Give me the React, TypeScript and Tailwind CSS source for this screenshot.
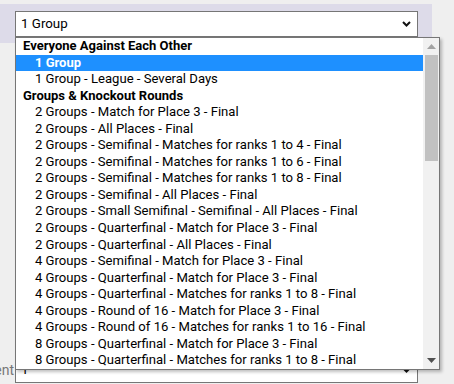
import React from 'react';

const sections: { title: string; items: string[] }[] = [
  {
    title: 'Everyone Against Each Other',
    items: ['1 Group', '1 Group - League - Several Days'],
  },
  {
    title: 'Groups & Knockout Rounds',
    items: [
      '2 Groups - Match for Place 3 - Final',
      '2 Groups - All Places - Final',
      '2 Groups - Semifinal - Matches for ranks 1 to 4 - Final',
      '2 Groups - Semifinal - Matches for ranks 1 to 6 - Final',
      '2 Groups - Semifinal - Matches for ranks 1 to 8 - Final',
      '2 Groups - Semifinal - All Places - Final',
      '2 Groups - Small Semifinal - Semifinal - All Places - Final',
      '2 Groups - Quarterfinal - Match for Place 3 - Final',
      '2 Groups - Quarterfinal - All Places - Final',
      '4 Groups - Semifinal - Match for Place 3 - Final',
      '4 Groups - Quarterfinal - Match for Place 3 - Final',
      '4 Groups - Quarterfinal - Matches for ranks 1 to 8 - Final',
      '4 Groups - Round of 16 - Match for Place 3 - Final',
      '4 Groups - Round of 16 - Matches for ranks 1 to 16 - Final',
      '8 Groups - Quarterfinal - Match for Place 3 - Final',
      '8 Groups - Quarterfinal - Matches for ranks 1 to 8 - Final',
    ],
  },
];

const selected = '1 Group';

const Chevron = () => (
  <svg width="9" height="6" viewBox="0 0 9 6" className="shrink-0">
    <path d="M1 1l3.5 3.5L8 1" fill="none" stroke="#111" strokeWidth="2" />
  </svg>
);

const SelectBox: React.FC<{ value: string }> = ({ value }) => (
  <div className="w-[403px] h-[26px] bg-white border border-[#767676] flex items-center justify-between pl-[5px] pr-[6px] text-[13.33px] text-black">
    <span>{value}</span>
    <Chevron />
  </div>
);

const DropdownList = () => (
  <div className="absolute left-[15px] top-[37px] w-[425px] h-[333px] bg-white border border-[#767676] shadow-[2px_2px_3px_rgba(0,0,0,0.25)] flex">
    <ul className="flex-1 overflow-hidden text-[13.1px] leading-[16.55px] text-black">
      {sections.map((s) => (
        <React.Fragment key={s.title}>
          <li className="pl-[7px] font-bold text-[13px] whitespace-nowrap">{s.title}</li>
          {s.items.map((item) => (
            <li
              key={item}
              className={
                item === selected
                  ? 'pl-[19px] whitespace-nowrap bg-[#1e90ff] text-white font-bold text-[13px]'
                  : 'pl-[19px] whitespace-nowrap'
              }
            >
              {item}
            </li>
          ))}
        </React.Fragment>
      ))}
    </ul>
    <div className="w-[16px] bg-[#f1f1f1] flex flex-col items-center">
      <div className="h-[17px] flex items-center justify-center">
        <svg width="9" height="5" viewBox="0 0 9 5">
          <path d="M0 5L4.5 0L9 5z" fill="#a3a3a3" />
        </svg>
      </div>
      <div className="w-[13px] h-[106px] bg-[#c1c1c1]" />
      <div className="flex-1" />
      <div className="h-[17px] flex items-center justify-center">
        <svg width="9" height="5" viewBox="0 0 9 5">
          <path d="M0 0L9 0L4.5 5z" fill="#505050" />
        </svg>
      </div>
    </div>
  </div>
);

export default function App() {
  return (
    <div className="relative w-[454px] h-[384px] overflow-hidden bg-[#efefef] font-['Roboto',sans-serif]">
      <div className="pt-[4px]">
        <div className="w-[432px] h-[39px] bg-[#dddbe9] pl-[15px] pt-[7px]">
          <SelectBox value="1 Group" />
        </div>
      </div>
      <div className="mt-[314px] flex items-center">
        <div className="w-[15px] overflow-hidden flex justify-end pr-[1px]">
          <span className="whitespace-nowrap text-[14px] text-[#777]">Tournament</span>
        </div>
        <SelectBox value="1" />
      </div>
      <DropdownList />
    </div>
  );
}
